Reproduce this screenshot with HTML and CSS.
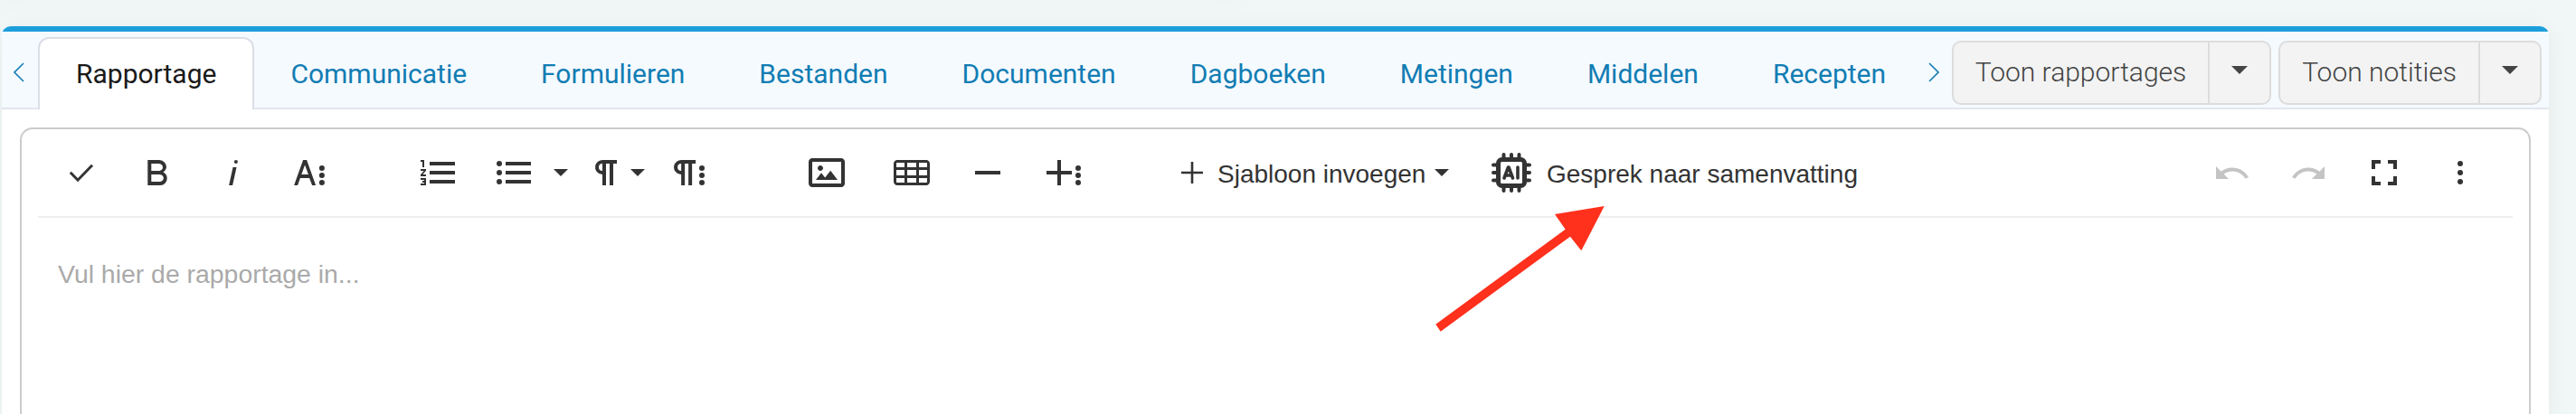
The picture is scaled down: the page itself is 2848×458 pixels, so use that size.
FILE: index.html
```html
<!DOCTYPE html>
<html lang="nl">
<head>
  <meta charset="utf-8">
  <title>Rapportage</title>
  <link rel="stylesheet" href="styles.css">
</head>
<body>
  <div class="previous-card"></div>
  <div class="card">
    <div class="card-accent"></div>
    <div class="tabbar">
      <button class="scroll scroll-left"><svg width="12" height="22" viewBox="0 0 12 22"><path d="M11 1L1 11l10 10"/></svg></button>
      <nav class="tabs">
        <a class="tab active">Rapportage</a>
        <a class="tab">Communicatie</a>
        <a class="tab">Formulieren</a>
        <a class="tab">Bestanden</a>
        <a class="tab">Documenten</a>
        <a class="tab">Dagboeken</a>
        <a class="tab">Metingen</a>
        <a class="tab">Middelen</a>
        <a class="tab">Recepten</a>
      </nav>
      <button class="scroll scroll-right"><svg width="12" height="22" viewBox="0 0 12 22"><path d="M1 1l10 10L1 21"/></svg></button>
      <div class="split-button rapportages">
        <button class="split-label">Toon rapportages</button>
        <button class="split-toggle"><svg width="18" height="9" viewBox="0 0 18 9"><path d="M0 0h18L9 9z"/></svg></button>
      </div>
      <div class="split-button notities">
        <button class="split-label">Toon notities</button>
        <button class="split-toggle"><svg width="18" height="9" viewBox="0 0 18 9"><path d="M0 0h18L9 9z"/></svg></button>
      </div>
    </div>

    <div class="editor">
      <div class="toolbar">
        <div class="group">
          <svg class="icon check" viewBox="0 0 24 24"><path d="M5.9 11.9l4.1 4.2 8-8.2"/></svg>
          <svg class="icon" viewBox="0 0 24 24"><path d="M15.25,11.8h0A3.68,3.68,0,0,0,17,9a3.93,3.93,0,0,0-3.86-4H6.65V19h7a3.74,3.74,0,0,0,3.7-3.78V15.1A3.64,3.64,0,0,0,15.25,11.8ZM8.65,7h4.2a2.09,2.09,0,0,1,2,1.3,2.09,2.09,0,0,1-1.37,2.61,2.23,2.23,0,0,1-.63.09H8.65Zm4.6,10H8.65V13h4.6a2.09,2.09,0,0,1,2,1.3,2.09,2.09,0,0,1-1.37,2.61A2.23,2.23,0,0,1,13.25,17Z"/></svg>
          <svg class="icon" viewBox="0 0 24 24"><path d="M11.76,9h2l-2.2,10h-2Zm1.68-4a1,1,0,1,0,1,1,1,1,0,0,0-1-1Z"/></svg>
          <svg class="icon" viewBox="0 0 24 24"><path d="M13.55,19h2l-5-14h-2l-5,14h2l1.4-4h5.1Zm-5.9-6,1.9-5.2L11.45,13Z"/><circle cx="18.95" cy="9.5" r="1.5"/><circle cx="18.95" cy="13.5" r="1.5"/><circle cx="18.95" cy="17.5" r="1.5"/></svg>
        </div>
        <div class="group lists">
          <svg class="icon" viewBox="0 0 24 24"><path d="M2.5,16h2v.5h-1v1h1V18h-2v1h3V15h-3Zm1-7h1V5h-2V6h1Zm-1,2H4.3L2.5,13.1V14h3V13H3.7l1.8-2.1V10h-3Zm5-5V8h14V6Zm0,12h14V16H7.5Zm0-5h14V11H7.5Z"/></svg>
          <div class="dropdown list-style">
            <svg class="icon" viewBox="0 0 24 24"><circle cx="4" cy="7" r="1.5"/><circle cx="4" cy="12" r="1.5"/><circle cx="4" cy="17" r="1.5"/><path d="M7.5 6h14v2h-14zM7.5 11h14v2h-14zM7.5 16h14v2h-14z"/></svg>
            <svg class="caret" viewBox="0 0 16 8"><path d="M0 0h16L8 8z"/></svg>
          </div>
          <div class="dropdown paragraph-format">
            <svg class="icon" viewBox="0 0 24 24"><path d="M10.15,5A4.11,4.11,0,0,0,6.08,8.18,4,4,0,0,0,10,13v6h2V7h2V19h2V7h2V5Z M10,7v4a2,2,0,0,1,0,-4Z" fill-rule="evenodd"/></svg>
            <svg class="caret" viewBox="0 0 16 8"><path d="M0 0h16L8 8z"/></svg>
          </div>
          <svg class="icon paragraph-more" viewBox="0 0 24 24"><path d="M7.68,5A4.11,4.11,0,0,0,3.61,8.18,4,4,0,0,0,7.57,13v6h2V7h2V19h2V7h2V5Z M7.57,7v4a2,2,0,0,1,0,-4Z" fill-rule="evenodd"/><circle cx="19" cy="9.5" r="1.5"/><circle cx="19" cy="13.5" r="1.5"/><circle cx="19" cy="17.5" r="1.5"/></svg>
        </div>
        <div class="group insert">
          <svg class="icon image" viewBox="0 0 24 24"><path d="M14.2,11l3.8,5H6l3-3.9l2.1,2.7L14,11H14.2z M8.5,11c0.8,0,1.5-0.7,1.5-1.5S9.3,8,8.5,8S7,8.7,7,9.5C7,10.3,7.7,11,8.5,11z M22,6v12c0,1.1-0.9,2-2,2H4c-1.1,0-2-0.9-2-2V6c0-1.1,0.9-2,2-2h16C21.1,4,22,4.9,22,6z M20,8.8V6H4v12h16V8.8z"/></svg>
          <svg class="icon" viewBox="0 0 24 24"><path d="M20,5H4C2.9,5,2,5.9,2,7v10c0,1.1,0.9,2,2,2h16c1.1,0,2-0.9,2-2V7C22,5.9,21.1,5,20,5z M9.5,13.5v-3h5v3H9.5z M14.5,15v2.5h-5V15H14.5z M9.5,9V6.5h5V9H9.5z M3.5,7c0-0.3,0.2-0.5,0.5-0.5h4V9H3.5V7z M3.5,10.5H8v3H3.5V10.5z M3.5,17v-2H8v2.5H4C3.7,17.5,3.5,17.3,3.5,17z M20.5,17c0,0.3-0.2,0.5-0.5,0.5h-4V15h4.5V17z M20.5,13.5H16v-3h4.5V13.5z M16,9V6.5h4c0.3,0,0.5,0.2,0.5,0.5v2H16z"/></svg>
          <svg class="icon" viewBox="0 0 24 24"><path d="M5 11h14v2H5z"/></svg>
          <svg class="icon" viewBox="0 0 24 24"><path d="M16.5,13h-6v6h-2V13h-6V11h6V5h2v6h6Z"/><circle cx="20" cy="9.5" r="1.5"/><circle cx="20" cy="13.5" r="1.5"/><circle cx="20" cy="17.5" r="1.5"/></svg>
        </div>
        <button class="text-button template">
          <svg class="plus" viewBox="0 0 24 24"><path d="M12 0v24M0 12h24"/></svg>
          <span class="template-label">Sjabloon invoegen</span>
          <svg class="caret" viewBox="0 0 16 8"><path d="M0 0h16L8 8z"/></svg>
        </button>
        <button class="text-button summary">
          <svg class="chip" viewBox="0 0 44 44">
            <rect x="7.5" y="7.5" width="29" height="29" rx="4"/>
            <path d="M13.5 2v5M22 2v5M30.5 2v5M13.5 37v5M22 37v5M30.5 37v5M2 13.5h5M2 22h5M2 30.5h5M37 13.5h5M37 22h5M37 30.5h5"/>
            <path class="chip-mark" d="M14 28l4.5-12h.5l4.5 12M15.5 25h6.5M29 16v12"/>
          </svg>
          <span class="summary-label">Gesprek naar samenvatting</span>
        </button>
        <div class="group history">
          <svg class="icon disabled" viewBox="0 0 24 24"><path d="M10.4,9.4c-1.7,0.3-3.2,0.9-4.6,2L3,8.5v7h7l-2.7-2.7c3.7-2.6,8.8-1.8,11.5,1.9c0.2,0.2,0.3,0.5,0.4,0.7l1.8-0.9C18.8,10.8,14.6,8.7,10.4,9.4z"/></svg>
          <svg class="icon disabled" viewBox="0 0 24 24"><path d="M13.6,9.4c1.7,0.3,3.2,0.9,4.6,2L21,8.5v7h-7l2.7-2.7C13,10.2,7.9,11,5.2,14.7c-0.2,0.2-0.3,0.5-0.4,0.7L3,14.5C5.2,10.8,9.4,8.7,13.6,9.4z"/></svg>
          <svg class="icon" viewBox="0 0 24 24"><path d="M5 5h5v2H7v3H5zM14 5h5v5h-2V7h-3zM5 14h2v3h3v2H5zM17 14h2v5h-5v-2h3z"/></svg>
          <svg class="icon" viewBox="0 0 24 24"><circle cx="12" cy="7" r="1.5"/><circle cx="12" cy="12" r="1.5"/><circle cx="12" cy="17" r="1.5"/></svg>
        </div>
      </div>
      <div class="placeholder">Vul hier de rapportage in...</div>
    </div>
  </div>

  <svg class="arrow" viewBox="0 0 188 140"><path d="M2.3 131.7L7.7 139.7 151 34.7 163.3 50.3 188.7 1 134 10 145.7 26.7z"/></svg>
</body>
</html>
```

FILE: styles.css
```css
* {
  box-sizing: border-box;
}

body {
  margin: 0;
  overflow: hidden;
  background-color: #f1f7f7;
  font-family: Roboto, sans-serif;
}

button {
  border: none;
  padding: 0;
  background: none;
  font: inherit;
  color: inherit;
}

svg {
  display: block;
  flex: none;
}

.previous-card {
  width: 1370px;
  height: 10px;
  margin-top: -10px;
  box-shadow: 0 0 24px rgba(0, 0, 0, 0.04);
}

.card {
  width: 2816px;
  height: 429px;
  margin: 29px 0 0 2px;
  border-radius: 12px 12px 0 0;
  background: linear-gradient(#fff, #fff) 0 6px no-repeat;
  box-shadow: 0 4px 24px rgba(0, 0, 0, 0.06);
}

.card-accent {
  height: 6px;
  overflow: hidden;
}

.card-accent::before {
  content: "";
  display: block;
  height: 20px;
  border-radius: 12px;
  background-color: #1c9edc;
}

.tabbar {
  display: flex;
  height: 86px;
  padding-right: 8px;
  border-bottom: 2px solid #e1e6ee;
  background-color: #f5faff;
}

.scroll {
  display: flex;
  flex: none;
  padding-top: 34px;
}

.scroll path {
  fill: none;
  stroke: #167fb5;
  stroke-width: 1.6;
}

.scroll-left {
  width: 40px;
  padding-left: 13px;
}

.scroll-right {
  width: 26px;
  margin-left: auto;
}

.tabs {
  display: flex;
  height: 86px;
  padding-top: 6px;
}

.tab {
  height: 78px;
  margin-right: -2px;
  padding: 0 40px;
  border: 2px solid transparent;
  border-bottom: none;
  line-height: 78px;
  font-size: 30px;
  color: #127db3;
}

.active {
  height: 80px;
  border-color: #dcdee7;
  border-radius: 12px 12px 0 0;
  background-color: #fff;
  color: #1a1a1a;
}

.split-button {
  display: flex;
  flex: none;
  height: 71px;
  margin-top: 10px;
  border: 2px solid #dcdcdc;
  border-radius: 10px;
  background-color: #f3f3f3;
  color: #444;
}

.rapportages {
  width: 353px;
}

.notities {
  width: 291px;
  margin-left: 8px;
}

.split-label {
  flex: 1;
  padding-bottom: 2px;
  font-size: 30px;
  font-weight: 300;
  white-space: nowrap;
}

.split-toggle {
  display: flex;
  width: 68px;
  padding: 26px 0 0 24px;
  border-left: 2px solid #dcdcdc;
  fill: #444;
}

.editor {
  height: 317px;
  margin: 20px 20px 0;
  padding: 0 18px;
  border: 2px solid #ccc;
  border-bottom: none;
  border-radius: 14px 14px 0 0;
}

.toolbar {
  display: flex;
  align-items: center;
  height: 98px;
  padding: 0 34px 0 24px;
  border-bottom: 2px solid #efefef;
  color: #333;
  fill: #333;
}

.group {
  display: flex;
  align-items: center;
  gap: 36px;
}

.icon {
  width: 48px;
  height: 48px;
}

.check {
  fill: none;
  stroke: #333;
  stroke-width: 1.5;
}

.caret {
  width: 16px;
  height: 8px;
}

.dropdown {
  display: flex;
  align-items: center;
}

.lists {
  margin-left: 94px;
}

.list-style {
  gap: 20px;
  margin-right: -18px;
}

.paragraph-format {
  gap: 3px;
  margin-right: -11px;
}

.insert {
  margin-left: 104px;
}

.image {
  margin-right: 10px;
}

.text-button {
  display: flex;
  align-items: center;
  font-family: "Liberation Sans", Arial, sans-serif;
  font-size: 28px;
  white-space: nowrap;
}

.template {
  margin-left: 106px;
}

.template .caret {
  margin-left: 15px;
}

.plus {
  width: 24px;
  height: 24px;
  fill: none;
  stroke: #333;
  stroke-width: 2.6;
}

.template-label {
  width: 241px;
  padding: 4px 0 0 16px;
  text-align: left;
}

.summary {
  margin-left: 47px;
}

.chip {
  width: 44px;
  height: 44px;
  fill: none;
  stroke: #333;
  stroke-width: 5;
}

.chip path {
  stroke-width: 4;
  stroke-linecap: round;
}

.chip .chip-mark {
  stroke-width: 3.6;
  stroke-linejoin: round;
}

.summary-label {
  padding: 4px 0 0 17px;
}

.history {
  margin-left: auto;
}

.disabled {
  fill: #c4c4c4;
}

.placeholder {
  padding: 45px 22px 0;
  font-family: "Liberation Sans", Arial, sans-serif;
  font-size: 28.4px;
  line-height: 34px;
  color: #aaa;
}

/* sits on top of the toolbar and the text area */
.arrow {
  position: absolute;
  left: 1585px;
  top: 227px;
  width: 188px;
  height: 140px;
  overflow: visible;
  fill: #ff301c;
}
```
